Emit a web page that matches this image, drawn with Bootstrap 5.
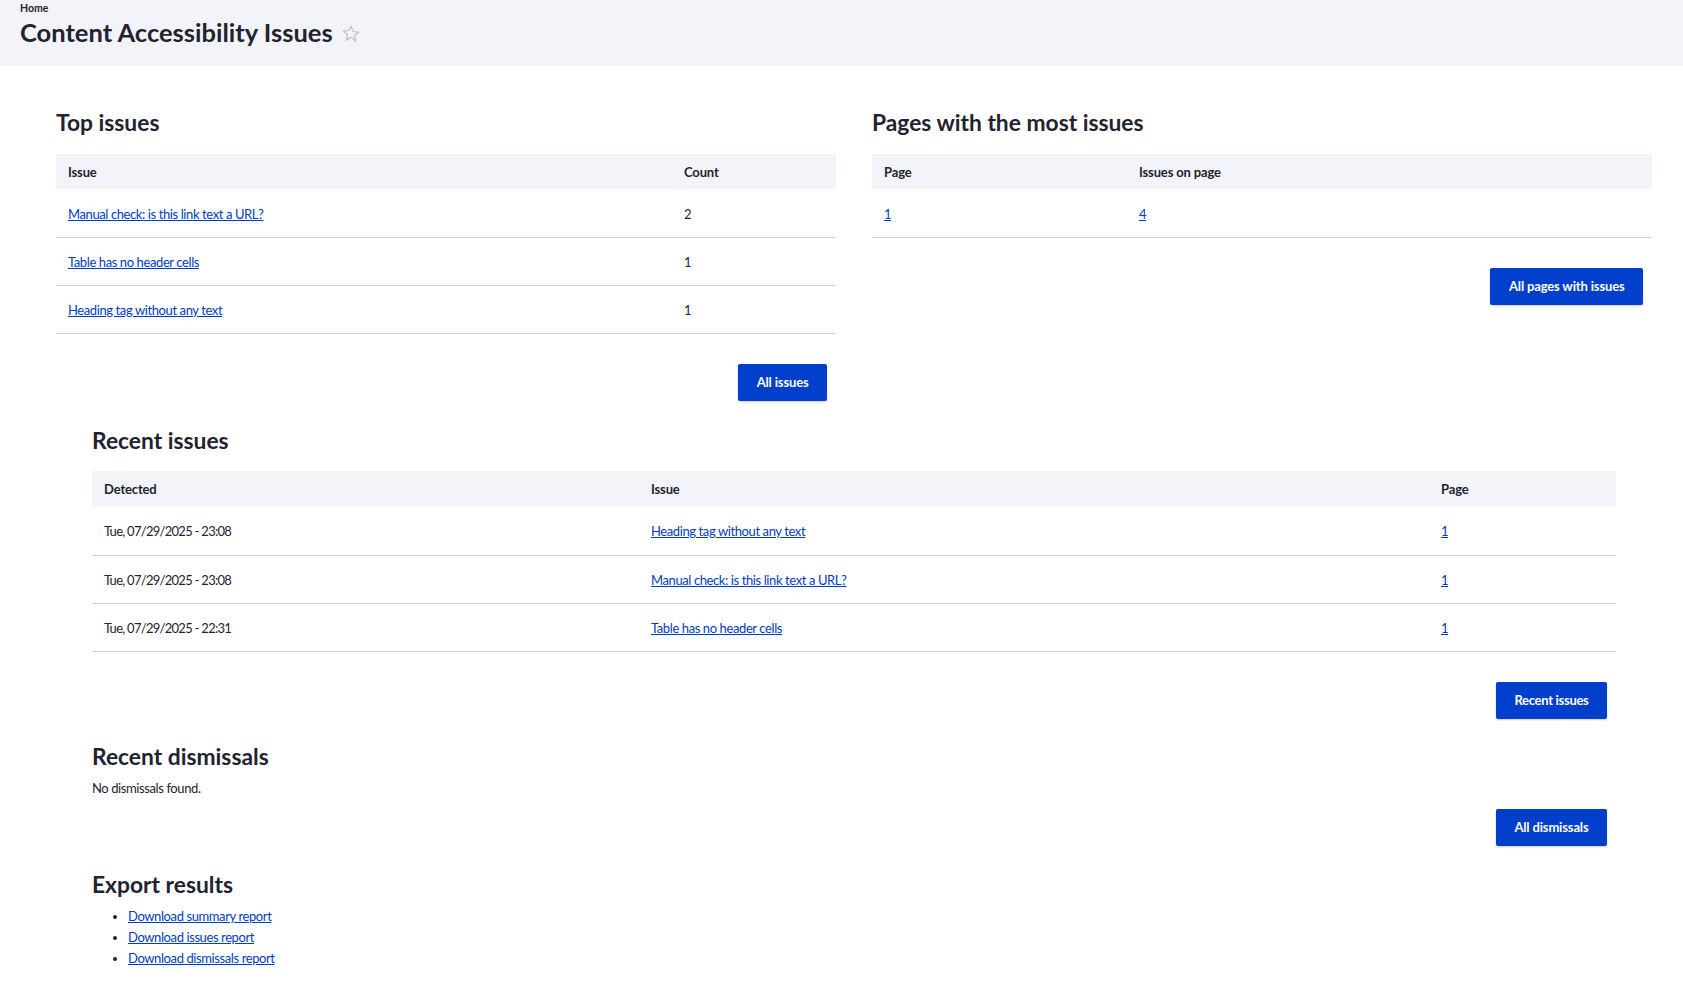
<!DOCTYPE html>
<html lang="en">
<head>
<meta charset="utf-8">
<title>Content Accessibility Issues</title>
<link href="https://cdn.jsdelivr.net/npm/bootstrap@5.3.0/dist/css/bootstrap.min.css" rel="stylesheet">
<style>
body{font-family:"Lato","Noto Sans",sans-serif;font-size:13px;letter-spacing:-.4px;color:#222330;background:#fff;overflow:hidden}
.page-head{background:#f3f4f9;height:66px;padding:2px 20px 0}
.crumb{font-size:10.5px;font-weight:700;line-height:12px;letter-spacing:0;color:#222330}
.crumb a{color:inherit;text-decoration:none}
.page-title{font-size:25.5px;font-weight:700;line-height:32px;margin:2px 0 0;letter-spacing:0;color:#222330}
.page-title svg{margin-left:9px;vertical-align:-1px}
.top-grid{display:grid;grid-template-columns:780px 780px;column-gap:36px;padding:41px 0 0 56px}
.low-wrap{padding:0 67px 0 92px}
.sec-title{font-size:22.8px;font-weight:700;line-height:30px;margin:0 0 16px;letter-spacing:0;color:#222330}
.top-grid .sec-title{margin-bottom:17px}
.rpt{margin:0;table-layout:fixed;width:100%;--bs-table-bg:transparent;border-collapse:collapse}
.rpt th{background:#f3f4f9;height:36px;padding:2px 12px 0;border:0;font-weight:700;letter-spacing:-.15px;vertical-align:middle;color:#222330}
.rpt td{height:48px;padding:2px 12px 0;border:0;border-bottom:1px solid #d3d4d9;vertical-align:middle;color:#222330;font-weight:400}
.top-grid .rpt td{padding-top:3px}
.top-grid .rpt th{height:35px}
.rpt a,.exports a{color:#003cc5}
.stamp{letter-spacing:-.72px}
.act-row{padding:30px 9px 0 0}
.act-btn{background:#003ecc;border:0;border-radius:2px;color:#fff;font-size:13px;font-weight:700;letter-spacing:-.15px;height:37px;padding:0 18.5px;line-height:37px;box-shadow:0 1px 2px rgba(0,0,0,.2)}
.act-btn:hover{background:#0036b1;color:#fff}
.tight{letter-spacing:-.3px}
.w-issue{width:616px}.w-page{width:255px}.w-det{width:547px}.w-iss2{width:790px}
.sec-recent{padding-top:24px}
.sec-recent tbody tr:first-child td{height:49px}
.sec-recent .act-row{padding-top:30px}
.sec-dismiss{padding-top:22px}
.sec-dismiss .sec-title{margin-bottom:7px}
.sec-dismiss p{margin:0;line-height:20px}
.sec-dismiss .act-row{padding-top:11px}
.sec-export{padding-top:23px}
.sec-export .sec-title{margin-bottom:7px}
.exports{margin:0;padding-left:36px;line-height:21px}
</style>
</head>
<body>
<header class="page-head">
  <nav class="crumb"><a href="#">Home</a></nav>
  <h1 class="page-title">Content Accessibility Issues<svg width="18" height="18" viewBox="0 0 18 18" aria-hidden="true"><path d="M9 1.6l2.2 4.9 5.3.6-4 3.6 1.1 5.3L9 12.4l-4.6 2.6 1.1-5.3-4-3.6 5.3-.6z" fill="none" stroke="#bdbec4" stroke-width="1.2"/></svg></h1>
</header>
<main>
  <div class="top-grid">
    <section>
      <h2 class="sec-title">Top issues</h2>
      <table class="table rpt">
        <thead><tr><th class="w-issue">Issue</th><th>Count</th></tr></thead>
        <tbody>
          <tr><td><a href="#">Manual check: is this link text a URL?</a></td><td>2</td></tr>
          <tr><td><a href="#">Table has no header cells</a></td><td>1</td></tr>
          <tr><td><a href="#">Heading tag without any text</a></td><td>1</td></tr>
        </tbody>
      </table>
      <div class="d-flex justify-content-end act-row"><a href="#" class="btn act-btn">All issues</a></div>
    </section>
    <section>
      <h2 class="sec-title">Pages with the most issues</h2>
      <table class="table rpt">
        <thead><tr><th class="w-page">Page</th><th>Issues on page</th></tr></thead>
        <tbody>
          <tr><td><a href="#">1</a></td><td><a href="#">4</a></td></tr>
        </tbody>
      </table>
      <div class="d-flex justify-content-end act-row"><a href="#" class="btn act-btn">All pages with issues</a></div>
    </section>
  </div>
  <div class="low-wrap">
    <section class="sec-recent">
      <h2 class="sec-title">Recent issues</h2>
      <table class="table rpt">
        <thead><tr><th class="w-det">Detected</th><th class="w-iss2">Issue</th><th>Page</th></tr></thead>
        <tbody>
          <tr><td class="stamp">Tue, 07/29/2025 - 23:08</td><td><a href="#">Heading tag without any text</a></td><td><a href="#">1</a></td></tr>
          <tr><td class="stamp">Tue, 07/29/2025 - 23:08</td><td><a href="#">Manual check: is this link text a URL?</a></td><td><a href="#">1</a></td></tr>
          <tr><td class="stamp">Tue, 07/29/2025 - 22:31</td><td><a href="#">Table has no header cells</a></td><td><a href="#">1</a></td></tr>
        </tbody>
      </table>
      <div class="d-flex justify-content-end act-row"><a href="#" class="btn act-btn tight">Recent issues</a></div>
    </section>
    <section class="sec-dismiss">
      <h2 class="sec-title">Recent dismissals</h2>
      <p>No dismissals found.</p>
      <div class="d-flex justify-content-end act-row"><a href="#" class="btn act-btn">All dismissals</a></div>
    </section>
    <section class="sec-export">
      <h2 class="sec-title">Export results</h2>
      <ul class="exports">
        <li><a href="#">Download summary report</a></li>
        <li><a href="#">Download issues report</a></li>
        <li><a href="#">Download dismissals report</a></li>
      </ul>
    </section>
  </div>
</main>
<script src="https://cdn.jsdelivr.net/npm/bootstrap@5.3.0/dist/js/bootstrap.bundle.min.js"></script>
</body>
</html>
